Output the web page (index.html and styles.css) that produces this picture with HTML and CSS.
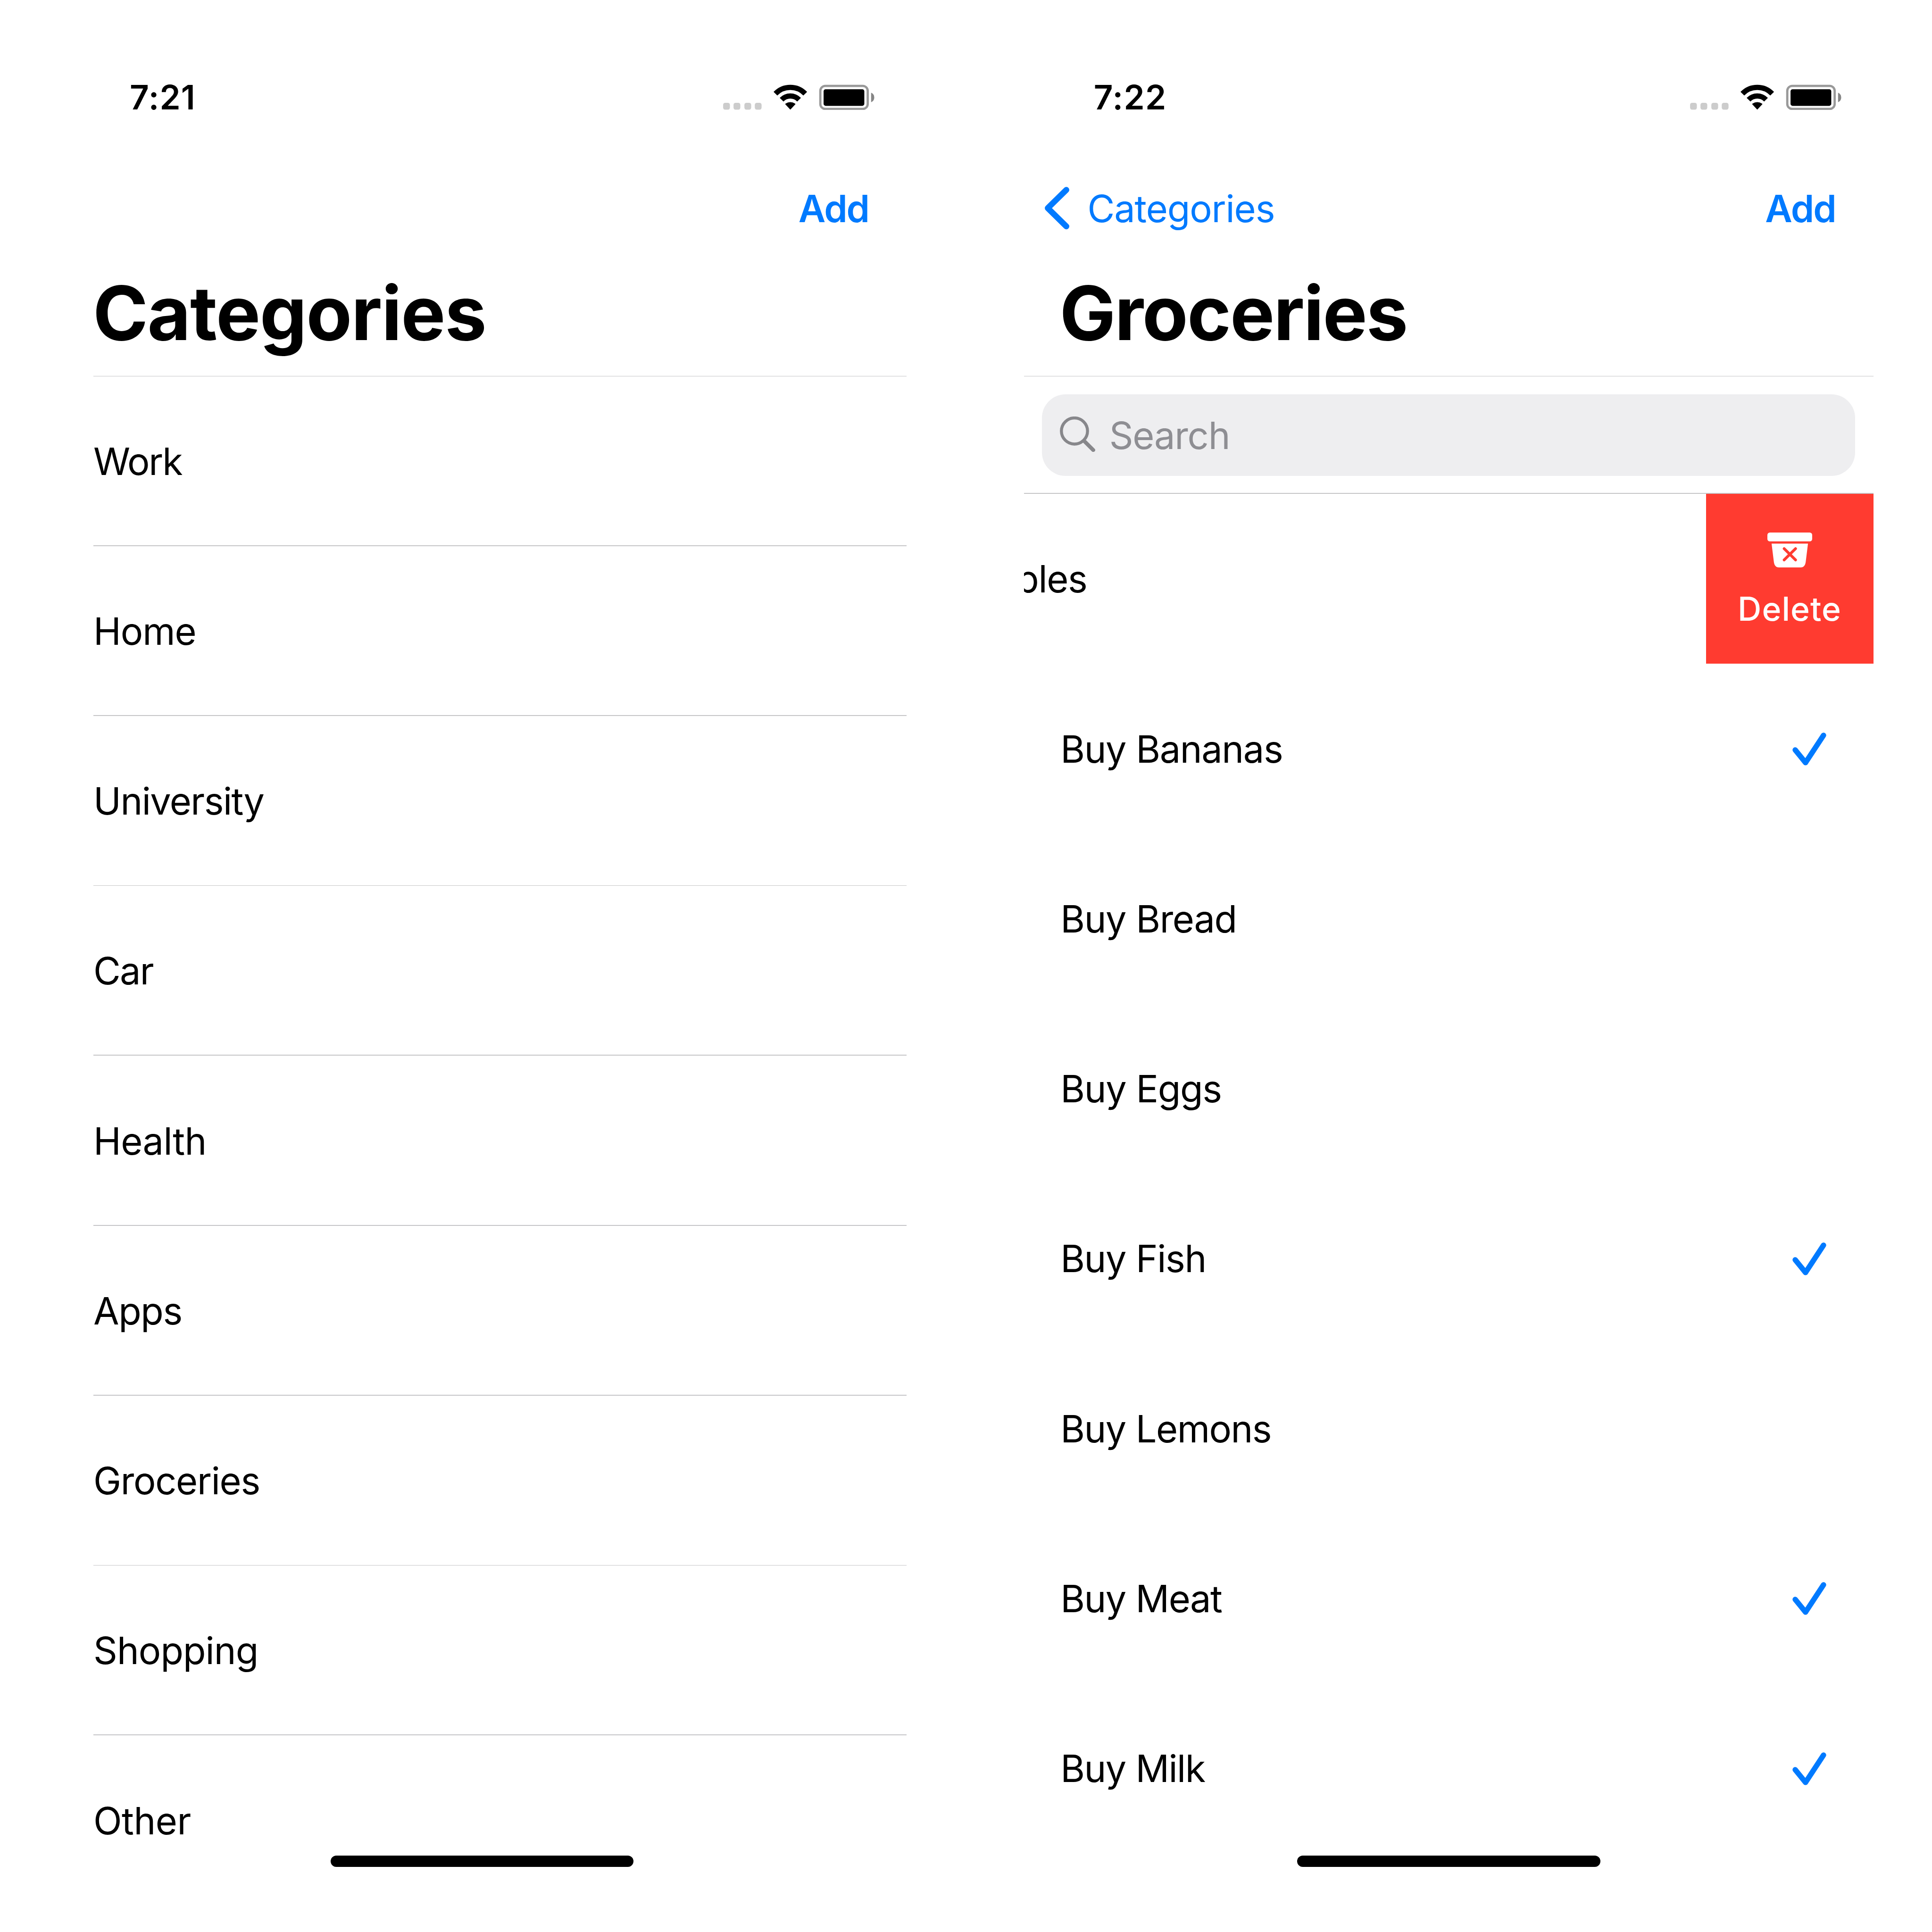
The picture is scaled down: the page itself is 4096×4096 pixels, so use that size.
FILE: index.html
```html
<!DOCTYPE html>
<html lang="en">
<head>
<meta charset="utf-8">
<title>Todo lists</title>
<link rel="stylesheet" href="styles.css">
</head>
<body>
<svg class="defs" width="0" height="0" aria-hidden="true">
  <symbol id="status-icons" viewBox="0 0 335 57">
    <g fill="#ccc">
      <rect x="0" y="40.7" width="15" height="15" rx="4.5"/>
      <rect x="23" y="40.7" width="15" height="15" rx="4.5"/>
      <rect x="47" y="40.7" width="15" height="15" rx="4.5"/>
      <rect x="70" y="40.7" width="15" height="15" rx="4.5"/>
    </g>
    <g fill="none" stroke="#000" stroke-width="11.5">
      <path d="M115.6 20.5A45.7 45.7 0 0 1 181.4 20.5"/>
      <path d="M129.2 33.7A26.8 26.8 0 0 1 167.8 33.7"/>
    </g>
    <path d="M138.3 43.4Q148.5 36.6 158.7 43.4L148.5 54.4Z" stroke="#000" stroke-width="2" stroke-linejoin="round"/>
    <rect x="214.8" y="3.2" width="104.7" height="51" rx="11" fill="none" stroke="#999" stroke-width="5"/>
    <rect x="222" y="10.7" width="90" height="36.6" rx="4.5"/>
    <path d="M327 18.3Q334 21.6 334 28.8Q334 36 327 39.3Z" fill="#858585"/>
  </symbol>
  <symbol id="check" viewBox="0 0 75 73">
    <path d="M6.2 38.4L29 66.6L68.8 6.2" fill="none" stroke="#007aff" stroke-width="11.8" stroke-linecap="round" stroke-linejoin="round"/>
  </symbol>
</svg>

<main class="screens">
  <section class="phone">
    <header class="status">
      <span class="time time-21">7:21</span>
      <svg class="status-icons"><use href="#status-icons"/></svg>
    </header>
    <nav class="nav"><a class="add">Add</a></nav>
    <h1 class="title title-categories">Categories</h1>
    <ul class="list categories">
      <li class="row ls-210">Work</li>
      <li class="row ls-110">Home</li>
      <li class="row row-thin ls-153">University</li>
      <li class="row ls-175">Car</li>
      <li class="row ls-60">Health</li>
      <li class="row ls-140">Apps</li>
      <li class="row row-thin ls-130">Groceries</li>
      <li class="row ls-90">Shopping</li>
      <li class="row row-last ls-50">Other</li>
    </ul>
    <div class="home-indicator"></div>
  </section>

  <section class="phone">
    <header class="status">
      <span class="time time-22">7:22</span>
      <svg class="status-icons"><use href="#status-icons"/></svg>
    </header>
    <nav class="nav">
      <a class="back">
        <svg class="chevron" viewBox="0 0 55.5 94.3"><path d="M48.7 6.8L7.6 47.15L48.7 87.5" fill="none" stroke="#007aff" stroke-width="13" stroke-linecap="round" stroke-linejoin="round"/></svg>
        <span class="ls-110">Categories</span>
      </a>
      <a class="add">Add</a>
    </nav>
    <h1 class="title title-groceries">Groceries</h1>
    <div class="search">
      <div class="field">
        <svg class="magnifier" viewBox="0 0 78 78"><circle cx="32.2" cy="32" r="28.8" fill="none" stroke="#87878b" stroke-width="6.6"/><path d="M53 53.5L73.6 74" stroke="#87878b" stroke-width="8.4" stroke-linecap="round"/></svg>
        <span class="placeholder ls-120">Search</span>
      </div>
    </div>
    <ul class="list items">
      <li class="row swiped ls-140">
        <span class="swiped-label">Buy Apples</span>
        <button class="delete">
          <svg class="bin" viewBox="0 0 99 77">
            <rect width="99" height="19.6" rx="5.5" fill="#fff"/>
            <path d="M9.3 24.6H89.7L84.8 64Q83.4 77 73.5 77H25.5Q15.6 77 14.2 64Z" fill="#fff"/>
            <path d="M37 35.6L62.3 60.6M62.3 35.6L37 60.6" stroke="#ff3b30" stroke-width="6" stroke-linecap="round"/>
          </svg>
          <span>Delete</span>
        </button>
      </li>
      <li class="row ls-135">Buy Bananas<svg class="check"><use href="#check"/></svg></li>
      <li class="row ls-135">Buy Bread</li>
      <li class="row ls-130">Buy Eggs</li>
      <li class="row ls-140">Buy Fish<svg class="check"><use href="#check"/></svg></li>
      <li class="row ls-148">Buy Lemons</li>
      <li class="row ls-150">Buy Meat<svg class="check"><use href="#check"/></svg></li>
      <li class="row ls-155">Buy Milk<svg class="check"><use href="#check"/></svg></li>
    </ul>
    <div class="home-indicator"></div>
  </section>
</main>
</body>
</html>
```
FILE: styles.css
```css
* { box-sizing: border-box; margin: 0; padding: 0; }

html, body { background: #fff; }

body {
  width: 4096px;
  height: 4096px;
  overflow: hidden;
  color: #000;
  font: 400 79.2px/96px Inter, "Liberation Sans", sans-serif;
}

.defs { position: absolute; }

.screens {
  display: flex;
  gap: 248.6px;
  height: 4096px;
  padding-left: 121px;
}

.phone {
  position: relative;
  flex: none;
  width: 1801px;
  overflow: hidden;
}

/* Status bar */
.status {
  display: flex;
  justify-content: space-between;
  align-items: flex-start;
  height: 345px;
  padding: 163px 67.4px 0 0;
}

.time { font-size: 70.9px; line-height: 86px; font-weight: 600; }
.time-21 { padding-left: 154px; letter-spacing: 1.2px; }
.time-22 { padding-left: 148.2px; letter-spacing: 1.3px; }

.status-icons { width: 321.6px; height: 54.7px; margin-top: 15.5px; }

/* Navigation bar */
.nav {
  display: flex;
  align-items: center;
  height: 193px;
  padding: 0 80px 0 43px;
  color: #007aff;
}

.back { display: flex; align-items: center; gap: 38.6px; }
.chevron { width: 53.3px; height: 90.5px; }
.add { margin-left: auto; font-weight: 600; letter-spacing: -2px; }

.title {
  height: 259.45px;
  padding: 29.6px 0 0 76px;
  font-size: 158.3px;
  line-height: 192px;
  font-weight: 700;
}
.title-categories { letter-spacing: -1.5px; }
.title-groceries { letter-spacing: -2.06px; }

/* Lists */
.list { list-style: none; }

.row {
  display: flex;
  justify-content: space-between;
  align-items: flex-start;
  height: 360.25px;
  padding-top: 132.2px;
  white-space: nowrap;
}

.categories { margin-left: 77px; }
.categories .row { border-bottom: 2px solid #c6c6c8; }
.categories .row:first-child { border-top: 1px solid #c6c6c8; padding-top: 131.6px; }
.categories .row-thin { border-bottom-width: 1px; }
.categories .row-last { border-bottom: 0; }

.items .row { padding-left: 77.6px; padding-right: 99.2px; }
.check { width: 72px; height: 70px; margin-top: 13.4px; }

/* Row pushed to the left to reveal its action */
.items .swiped { padding: 0; }
.swiped-label { margin: 132.2px 0 0 -276.4px; }

.delete {
  display: flex;
  flex-direction: column;
  align-items: center;
  gap: 45.9px;
  width: 355px;
  height: 360px;
  padding-top: 81.6px;
  border: 0;
  background: #ff3b30;
  color: #fff;
  font: 450 69.6px/84px Inter, "Liberation Sans", sans-serif;
  letter-spacing: 1.1px;
}
.bin { flex: none; width: 95px; height: 73.9px; }

/* Search bar */
.search {
  height: 249.85px;
  padding: 37.6px 38.2px 0 38.6px;
  border-top: 1px solid #c6c6c8;
  border-bottom: 2px solid #c6c6c8;
}

.field {
  display: flex;
  align-items: flex-start;
  height: 172.8px;
  padding: 39.4px 38px 0;
  border-radius: 50px;
  background: #eeeef0;
  color: #8e8e93;
}
.magnifier { width: 75px; height: 75px; margin: 7.6px 29.5px 0 0; }

.home-indicator {
  position: absolute;
  left: 579.8px;
  top: 3934px;
  width: 642.6px;
  height: 24px;
  border-radius: 12px;
  background: #000;
}

/* Per-label tracking */
.ls-50 { letter-spacing: -0.5px; }
.ls-60 { letter-spacing: -0.6px; }
.ls-90 { letter-spacing: -0.9px; }
.ls-110 { letter-spacing: -1.1px; }
.ls-120 { letter-spacing: -1.2px; }
.ls-130 { letter-spacing: -1.3px; }
.ls-135 { letter-spacing: -1.35px; }
.ls-140 { letter-spacing: -1.4px; }
.ls-148 { letter-spacing: -1.48px; }
.ls-150 { letter-spacing: -1.5px; }
.ls-153 { letter-spacing: -1.53px; }
.ls-155 { letter-spacing: -1.55px; }
.ls-175 { letter-spacing: -1.75px; }
.ls-210 { letter-spacing: -2.1px; }
```
